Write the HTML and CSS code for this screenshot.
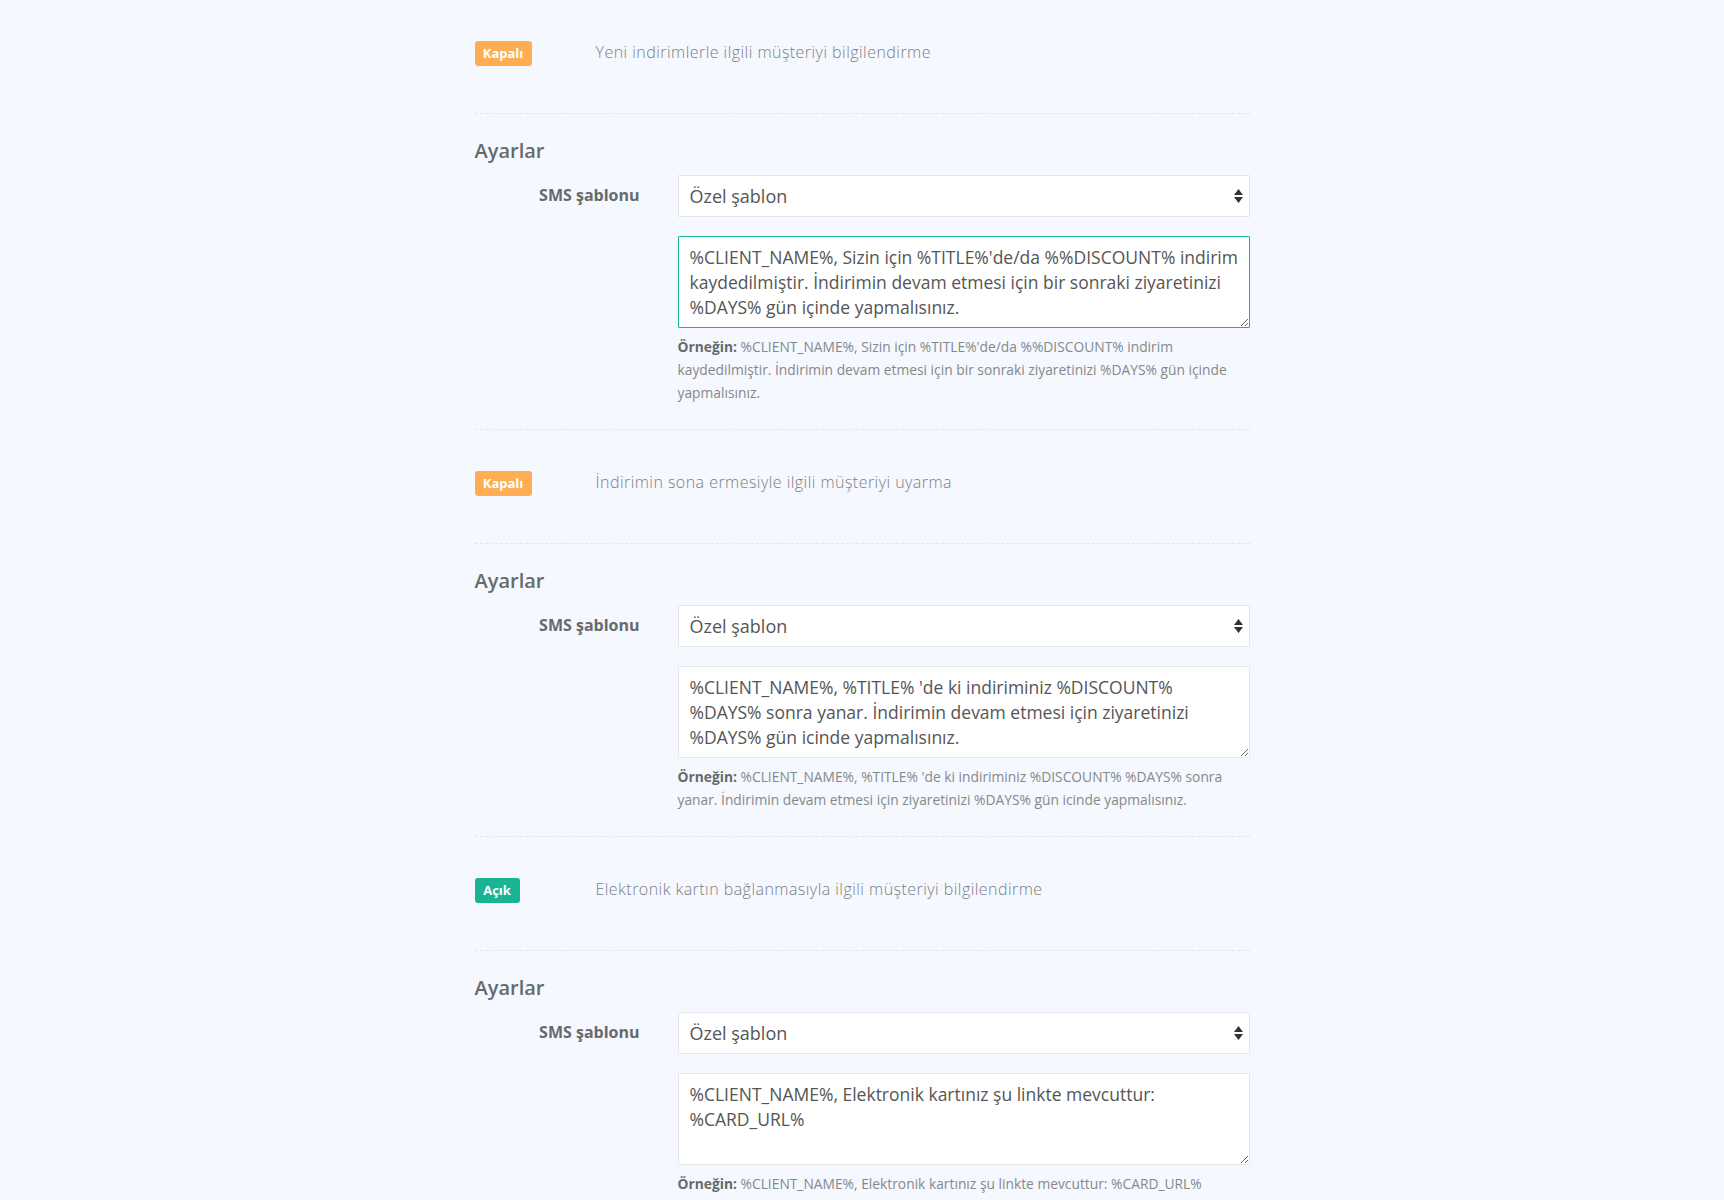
FILE: index.html
```html
<!DOCTYPE html>
<html lang="tr">
<head>
    <meta charset="UTF-8">
    <title>SMS bildirimleri</title>
    <link rel="stylesheet" href="styles.css">
</head>
<body>
    <div class="notify-list">

        <!-- Yeni indirim -->
        <div class="notify-block">
            <div class="notify-head">
                <span class="state-badge state-off">Kapalı</span>
                <span class="notify-title">Yeni indirimlerle ilgili müşteriyi bilgilendirme</span>
            </div>
            <div class="notify-settings">
                <h3>Ayarlar</h3>
                <div class="form-row">
                    <label class="form-label">SMS şablonu</label>
                    <div class="select-wrap">
                        <select class="form-control">
                            <option>Özel şablon</option>
                        </select>
                        <svg class="select-arrow" width="9" height="14" viewBox="0 0 9 14"><path d="M4.5 0L9 6H0z M4.5 14L0 8h9z" fill="#333"/></svg>
                    </div>
                </div>
                <div class="form-row">
                    <span></span>
                    <div>
                        <textarea class="form-control sms-text is-focused">%CLIENT_NAME%, Sizin için %TITLE%'de/da %%DISCOUNT% indirim kaydedilmiştir. İndirimin devam etmesi için bir sonraki ziyaretinizi %DAYS% gün içinde yapmalısınız.</textarea>
                        <p class="help-text"><strong>Örneğin:</strong> %CLIENT_NAME%, Sizin için %TITLE%'de/da %%DISCOUNT% indirim kaydedilmiştir. İndirimin devam etmesi için bir sonraki ziyaretinizi %DAYS% gün içinde yapmalısınız.</p>
                    </div>
                </div>
            </div>
        </div>

        <!-- Indirim sona eriyor -->
        <div class="notify-block">
            <div class="notify-head">
                <span class="state-badge state-off">Kapalı</span>
                <span class="notify-title">İndirimin sona ermesiyle ilgili müşteriyi uyarma</span>
            </div>
            <div class="notify-settings">
                <h3>Ayarlar</h3>
                <div class="form-row">
                    <label class="form-label">SMS şablonu</label>
                    <div class="select-wrap">
                        <select class="form-control">
                            <option>Özel şablon</option>
                        </select>
                        <svg class="select-arrow" width="9" height="14" viewBox="0 0 9 14"><path d="M4.5 0L9 6H0z M4.5 14L0 8h9z" fill="#333"/></svg>
                    </div>
                </div>
                <div class="form-row">
                    <span></span>
                    <div>
                        <textarea class="form-control sms-text">%CLIENT_NAME%, %TITLE% 'de ki indiriminiz %DISCOUNT% %DAYS% sonra yanar. İndirimin devam etmesi için ziyaretinizi %DAYS% gün icinde yapmalısınız.</textarea>
                        <p class="help-text"><strong>Örneğin:</strong> %CLIENT_NAME%, %TITLE% 'de ki indiriminiz %DISCOUNT% %DAYS% sonra yanar. İndirimin devam etmesi için ziyaretinizi %DAYS% gün icinde yapmalısınız.</p>
                    </div>
                </div>
            </div>
        </div>

        <!-- Elektronik kart -->
        <div class="notify-block">
            <div class="notify-head">
                <span class="state-badge state-on">Açık</span>
                <span class="notify-title">Elektronik kartın bağlanmasıyla ilgili müşteriyi bilgilendirme</span>
            </div>
            <div class="notify-settings">
                <h3>Ayarlar</h3>
                <div class="form-row">
                    <label class="form-label">SMS şablonu</label>
                    <div class="select-wrap">
                        <select class="form-control">
                            <option>Özel şablon</option>
                        </select>
                        <svg class="select-arrow" width="9" height="14" viewBox="0 0 9 14"><path d="M4.5 0L9 6H0z M4.5 14L0 8h9z" fill="#333"/></svg>
                    </div>
                </div>
                <div class="form-row">
                    <span></span>
                    <div>
                        <textarea class="form-control sms-text">%CLIENT_NAME%, Elektronik kartınız şu linkte mevcuttur: %CARD_URL%</textarea>
                        <p class="help-text"><strong>Örneğin:</strong> %CLIENT_NAME%, Elektronik kartınız şu linkte mevcuttur: %CARD_URL%</p>
                    </div>
                </div>
            </div>
        </div>

    </div>
</body>
</html>
```

FILE: styles.css
```css
body {
    margin: 0;
    background-color: #f5f8fe;
    font-family: "Open Sans", "Noto Sans", sans-serif;
    color: #676a6c;
}

.notify-list {
    width: 775px;
    margin: 0 auto;
}

.notify-block + .notify-block {
    border-top: 1px dashed #e3e6ea;
}

.notify-head {
    display: flex;
    align-items: center;
    padding: 41px 0 47px 0;
    border-bottom: 1px dashed #e3e6ea;
}

.state-badge {
    display: inline-block;
    width: 57px;
    height: 25px;
    line-height: 25px;
    text-align: center;
    border-radius: 3px;
    color: white;
    font-size: 13px;
    font-weight: bold;
    flex-shrink: 0;
}

.state-off {
    background: #ffad52;
}

.state-on {
    width: 45px;
    background: #1ab394;
}

.notify-title {
    margin: 0 0 3px 64px;
    font-size: 16px;
    font-weight: 300;
    color: #7b7e82;
    letter-spacing: 0.46px;
}

.state-on + .notify-title {
    margin-left: 76px;
}

.notify-settings {
    padding: 25px 0 25px 0;
}

.notify-settings h3 {
    margin: 0 0 12px 0;
    font-size: 20px;
    font-weight: 600;
    line-height: 24px;
    color: #676a6c;
}

.form-row {
    display: grid;
    grid-template-columns: 203px 1fr;
}

.form-row + .form-row {
    margin-top: 19px;
}

.form-label {
    text-align: right;
    padding-right: 38px;
    font-size: 16px;
    font-weight: bold;
    line-height: 40px;
    color: #676a6c;
}

.select-wrap {
    position: relative;
}

.form-control {
    display: block;
    width: 100%;
    box-sizing: border-box;
    background: white;
    border: 1px solid #e5e6e7;
    border-radius: 1px;
    font-family: "Open Sans", "Noto Sans", sans-serif;
    font-size: 18px;
    color: #555;
    outline: none;
}

select.form-control {
    height: 42px;
    padding: 0 11px;
    appearance: none;
    -webkit-appearance: none;
}

.select-arrow {
    position: absolute;
    right: 7px;
    top: 14px;
    pointer-events: none;
}

.sms-text {
    height: 92px;
    padding: 8px 10px 6px 11px;
    font-size: 17.5px;
    line-height: 25px;
    resize: vertical;
}

.sms-text.is-focused {
    border-color: #1ab394;
}

.help-text {
    margin: 7px 0 0 0;
    font-size: 13.8px;
    line-height: 23px;
    color: #85888b;
}

.help-text strong {
    color: #676a6c;
}
```
